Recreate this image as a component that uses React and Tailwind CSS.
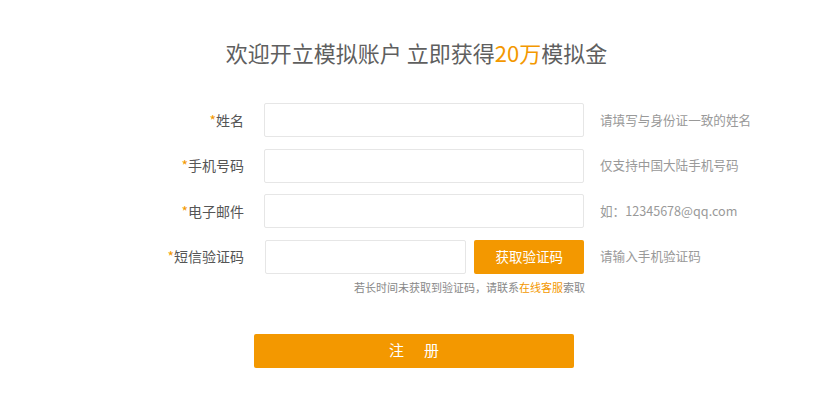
import React from 'react';

const font = { fontFamily: '"Noto Sans CJK SC", "Noto Sans", sans-serif' };

const Field = ({ label, hint, children }) => (
  <div className="flex items-center h-[34px]">
    <label className="w-[244px] text-right text-[14px] text-[#555]">
      <span className="text-[#f39800]">*</span>
      {label}
    </label>
    <div className="ml-[20px] w-[320px] flex">{children}</div>
    <span className="ml-[16px] text-[12.6px] text-[#999]">{hint}</span>
  </div>
);

const Input = ({ className = 'w-[320px]' }) => (
  <input
    type="text"
    className={`${className} h-[34px] border border-[#e6e6e6] rounded-[2px] px-2 text-[14px] outline-none focus:border-[#f39800]`}
  />
);

const App = () => {
  return (
    <div className="w-[833px] h-[418px] bg-white" style={font}>
      <h1 className="pt-[37px] text-center text-[22px] leading-[30px] text-[#5f5f5f]">
        欢迎开立模拟账户 立即获得<span className="text-[#f39800]">20万</span>模拟金
      </h1>

      <form className="mt-[36px] flex flex-col gap-y-[11.5px]" onSubmit={e => e.preventDefault()}>
        <Field label="姓名" hint="请填写与身份证一致的姓名">
          <Input />
        </Field>
        <Field label="手机号码" hint="仅支持中国大陆手机号码">
          <Input />
        </Field>
        <Field label="电子邮件" hint="如：12345678@qq.com">
          <Input />
        </Field>
        <Field label="短信验证码" hint="请输入手机验证码">
          <Input className="w-[202px] ml-[1px]" />
          <button
            type="button"
            className="ml-[8px] w-[110px] h-[34px] bg-[#f39800] text-white text-[13.5px] rounded-[2px]"
          >
            获取验证码
          </button>
        </Field>
      </form>

      <p className="w-[585px] mt-[6px] text-right text-[11px] leading-[14px] text-[#888]">
        若长时间未获取到验证码，请联系<a className="text-[#f39800]">在线客服</a>索取
      </p>

      <div className="mt-[40px] pl-[254px]">
        <button
          type="submit"
          className="w-[320px] h-[34px] bg-[#f39800] text-white text-[15px] rounded-[2px] tracking-[20px] indent-[20px]"
        >
          注册
        </button>
      </div>
    </div>
  );
};

export default App;
